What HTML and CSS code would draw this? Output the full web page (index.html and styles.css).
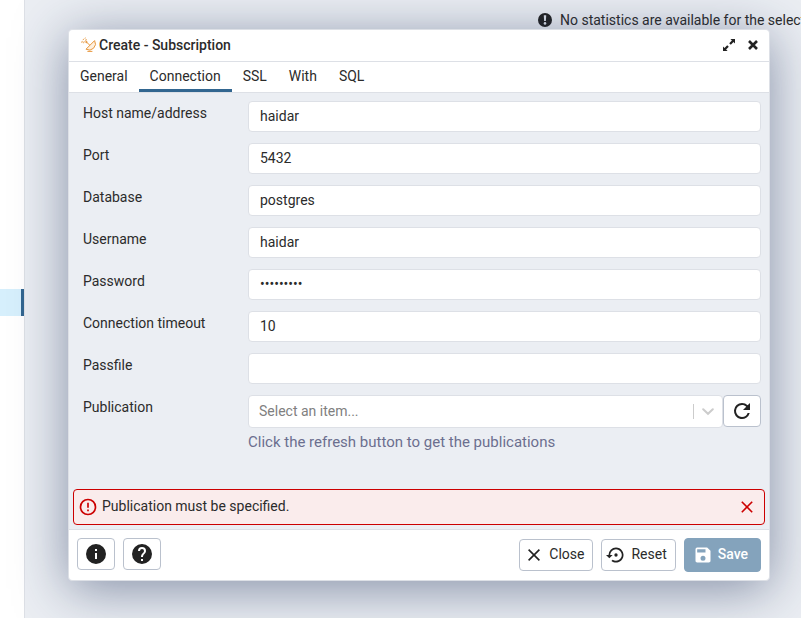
FILE: index.html
```html
<!DOCTYPE html>
<html lang="en">
<head>
<meta charset="utf-8">
<title>Create - Subscription</title>
<link rel="stylesheet" href="styles.css">
</head>
<body>
<div class="workspace">
  <aside class="tree"><div class="tree-selected"></div></aside>
  <main class="stats">
    <p class="notice">
      <svg width="14" height="14" viewBox="0 0 14 14" aria-hidden="true"><circle cx="7" cy="7" r="7" fill="#222"/><path d="M5.8 2.3h2.4L7.9 8H6.1z" fill="#e0e4eb"/><circle cx="7" cy="10.4" r="1.3" fill="#e0e4eb"/></svg>
      <span>No statistics are available for the selected object.</span>
    </p>
  </main>
</div>
<div class="overlay">
  <section class="dialog" role="dialog" aria-labelledby="title">
    <header class="titlebar">
      <svg width="16" height="16" viewBox="0 0 16 16" fill="none" stroke="#e8983e" aria-hidden="true"><path d="M5 12.2 13.6 3.6a6.3 6.3 0 0 1-8.6 8.6z" fill="#fdf0e0"/><path d="M9 8.4 5.4 5M6.4 14.4h5"/><circle cx="5.4" cy="5" r=".7" fill="#e8983e"/><path d="M.8 5.8A6 6 0 0 1 5 .8M2.6 6.2A4 4 0 0 1 6 2.6" stroke-dasharray="2 1"/></svg>
      <h1 id="title">Create - Subscription</h1>
      <button class="icon-btn" type="button" aria-label="Maximize"><svg width="12" height="12" viewBox="0 0 12 12"><path d="M7.4 0H12v4.6l-1.5-1.5-2.7 2.7-1.6-1.6 2.7-2.7zM4.6 12H0V7.4l1.5 1.5 2.7-2.7 1.6 1.6-2.7 2.7z" fill="#222"/></svg></button>
      <button class="icon-btn" type="button" aria-label="Close dialog"><svg width="10" height="10" viewBox="0 0 10 10"><path d="m1 1 8 8m0-8L1 9" stroke="#222" stroke-width="2.6"/></svg></button>
    </header>
    <nav class="tabs" role="tablist">
      <button type="button" role="tab">General</button>
      <button type="button" role="tab" class="active" aria-selected="true">Connection</button>
      <button type="button" role="tab">SSL</button>
      <button type="button" role="tab">With</button>
      <button type="button" role="tab">SQL</button>
    </nav>
    <form class="form" id="connection">
      <div class="row"><label for="host">Host name/address</label><input id="host" type="text" value="haidar"></div>
      <div class="row"><label for="port">Port</label><input id="port" type="text" value="5432"></div>
      <div class="row"><label for="db">Database</label><input id="db" type="text" value="postgres"></div>
      <div class="row"><label for="user">Username</label><input id="user" type="text" value="haidar"></div>
      <div class="row"><label for="pass">Password</label><input id="pass" type="password" value="password1"></div>
      <div class="row"><label for="timeout">Connection timeout</label><input id="timeout" type="text" value="10"></div>
      <div class="row"><label for="passfile">Passfile</label><input id="passfile" type="text"></div>
      <div class="row">
        <label for="pub">Publication</label>
        <div>
          <div class="picker">
            <div class="select-box">
              <select id="pub"><option>Select an item...</option></select>
              <span class="divider"></span>
              <svg width="12" height="8" viewBox="0 0 12 8" aria-hidden="true"><path d="m1.2 1.2 4.8 4.6 4.8-4.6" fill="none" stroke="#ccc" stroke-width="2" stroke-linecap="round"/></svg>
            </div>
            <button class="btn square" type="button" aria-label="Refresh"><svg width="24" height="24" viewBox="0 0 24 24"><path d="M17.65 6.35A7.958 7.958 0 0 0 12 4a8 8 0 1 0 7.73 10h-2.08A5.99 5.99 0 0 1 12 18a6 6 0 1 1 0-12c1.66 0 3.14.69 4.22 1.78L13 11h7V4z" fill="#222"/></svg></button>
          </div>
          <p class="help">Click the refresh button to get the publications</p>
        </div>
      </div>
    </form>
    <div class="alert" role="alert">
      <svg width="20" height="20" viewBox="0 0 24 24" aria-hidden="true"><path d="M11 15h2v2h-2zm0-8h2v6h-2zm1-5a10 10 0 1 0 0 20 10 10 0 0 0 0-20zm0 18a8 8 0 1 1 0-16 8 8 0 0 1 0 16z" fill="#c00"/></svg>
      <span>Publication must be specified.</span>
      <button class="icon-btn" type="button" aria-label="Dismiss"><svg width="12" height="12" viewBox="0 0 12 12"><path d="m.8.8 10.4 10.4m0-10.4L.8 11.2" stroke="#c00" stroke-width="1.6"/></svg></button>
    </div>
    <footer class="footer">
      <button class="btn square" type="button" aria-label="Information"><svg width="24" height="24" viewBox="0 0 24 24"><path d="M12 2a10 10 0 1 0 0 20 10 10 0 0 0 0-20zm1 15h-2v-6h2zm0-8h-2V7h2z" fill="#222"/></svg></button>
      <button class="btn square" type="button" aria-label="Help"><svg width="24" height="24" viewBox="0 0 24 24"><path d="M12 2a10 10 0 1 0 0 20 10 10 0 0 0 0-20zm1 17h-2v-2h2zm2.07-7.75-.9.92C13.45 12.9 13 13.5 13 15h-2v-.5c0-1.1.45-2.1 1.17-2.83l1.24-1.26c.37-.36.59-.86.59-1.41a2 2 0 0 0-4 0H8a4 4 0 0 1 8 0c0 .88-.36 1.68-.93 2.25z" fill="#222"/></svg></button>
      <div class="actions">
        <button class="btn" type="button"><svg width="20" height="20" viewBox="0 0 20 20"><path d="m4.6 4.6 10.8 10.8m0-10.8L4.6 15.4" stroke="#222" stroke-width="1.6"/></svg><span>Close</span></button>
        <button class="btn" type="button"><svg width="20" height="20" viewBox="0 0 24 24"><path d="M14 12a2 2 0 1 0-4 0 2 2 0 0 0 4 0zM12 3a9 9 0 0 0-9 9H0l4 4 4-4H5a7 7 0 1 1 7 7c-1.51 0-2.91-.49-4.06-1.3l-1.42 1.44A9 9 0 1 0 12 3z" fill="#222"/></svg><span>Reset</span></button>
        <button class="btn primary" type="submit" form="connection" disabled><svg width="20" height="20" viewBox="0 0 24 24"><path d="M17 3H5a2 2 0 0 0-2 2v14c0 1.1.9 2 2 2h14c1.1 0 2-.9 2-2V7zm-5 16a3 3 0 1 1 0-6 3 3 0 0 1 0 6zm3-10H5V5h10z" fill="#fff"/></svg><span>Save</span></button>
      </div>
    </footer>
  </section>
</div>
</body>
</html>
```
FILE: styles.css
```css
* { box-sizing: border-box; }
body {
  margin: 0;
  height: 100vh;
  overflow: hidden;
  font: 14px/20px Roboto, sans-serif;
  color: #2b2b2b;
}
button, input, select { font: inherit; color: inherit; }
h1, p { margin: 0; }
svg { display: block; flex: none; }

.workspace { display: flex; height: 100%; background: #ebeef3; }
.tree { width: 25px; flex: none; padding-top: 289px; background: #fff; border-right: 1px solid #dde0e6; }
.tree-selected { height: 27px; background: #d6effc; border-right: 3px solid #326690; }
.stats { flex: 1; min-width: 0; overflow: hidden; padding: 10px 0 0 513px; }
.notice { display: flex; align-items: center; gap: 8px; white-space: nowrap; }

.overlay {
  position: absolute;
  inset: 0;
  display: flex;
  align-items: flex-start;
  padding: 29px 31px 37px 68px;
}
.dialog {
  flex: 1;
  min-width: 0;
  background: #ebeef3;
  border: 1px solid #dde0e6;
  border-radius: 4px;
  box-shadow: 0 8px 52px rgba(30, 48, 90, 0.5);
}
.titlebar {
  display: flex;
  align-items: center;
  height: 32px;
  padding: 0 4px 2px 12px;
  background: #fff;
  border-bottom: 1px solid #dde0e6;
  border-radius: 4px 4px 0 0;
}
.titlebar h1 { flex: 1; margin-left: 2px; font-size: 14px; line-height: 20px; font-weight: 500; }
.icon-btn {
  display: flex;
  align-items: center;
  justify-content: center;
  width: 24px;
  height: 24px;
  padding: 0;
  border: 0;
  background: none;
}
.tabs { display: flex; height: 31px; background: #fff; border-bottom: 1px solid #dde0e6; }
.tabs button { padding: 0 11px; border: 0; border-bottom: 3px solid transparent; background: none; }
.tabs .active { border-bottom-color: #326690; }

.form { display: grid; gap: 11px; padding: 8px 8px 37px 14px; }
.row { display: grid; grid-template-columns: 165px 1fr; align-items: start; }
.row label { padding-top: 2px; }
.row input {
  width: 100%;
  height: 31px;
  padding: 0 11px 2px;
  border: 1px solid #dde0e6;
  border-radius: 4px;
  background: #fff;
}
.picker { display: flex; align-items: flex-start; }
.select-box {
  flex: 1;
  display: flex;
  align-items: center;
  height: 33px;
  padding-right: 8px;
  border: 1px solid #dde0e6;
  border-radius: 4px;
  background: #fff;
}
.select-box select {
  flex: 1;
  height: 31px;
  padding: 0 10px 2px;
  border: 0;
  appearance: none;
  background: none;
  color: #808080;
}
.divider { width: 1px; height: 15px; margin-right: 8px; background: #ccc; }
.help { margin-top: 4px; font-size: 15px; color: #6b6f8f; }

.alert {
  display: flex;
  align-items: center;
  gap: 4px;
  height: 36px;
  margin: 0 4px 4px;
  padding: 0 5px 0 4px;
  background: #faecec;
  border: 1px solid #c00;
  border-radius: 4px;
}
.alert span { flex: 1; padding-bottom: 2px; }

.footer {
  display: flex;
  align-items: flex-start;
  gap: 8px;
  padding: 8px;
  background: #fff;
  border-top: 1px solid #dde0e6;
  border-radius: 0 0 4px 4px;
}
.actions { display: flex; align-items: center; gap: 8px; margin-left: auto; }
.btn {
  display: flex;
  align-items: center;
  justify-content: center;
  gap: 5px;
  height: 32px;
  padding: 0 8px 0 4px;
  border: 1px solid #bac1cd;
  border-radius: 4px;
  background: #fff;
}
.btn span { padding-bottom: 2px; }
.square { width: 38px; padding: 0; }
.primary { height: 34px; padding: 0 12px 0 8px; border-color: #84a3bc; background: #84a3bc; color: #fff; font-weight: 500; }
```
